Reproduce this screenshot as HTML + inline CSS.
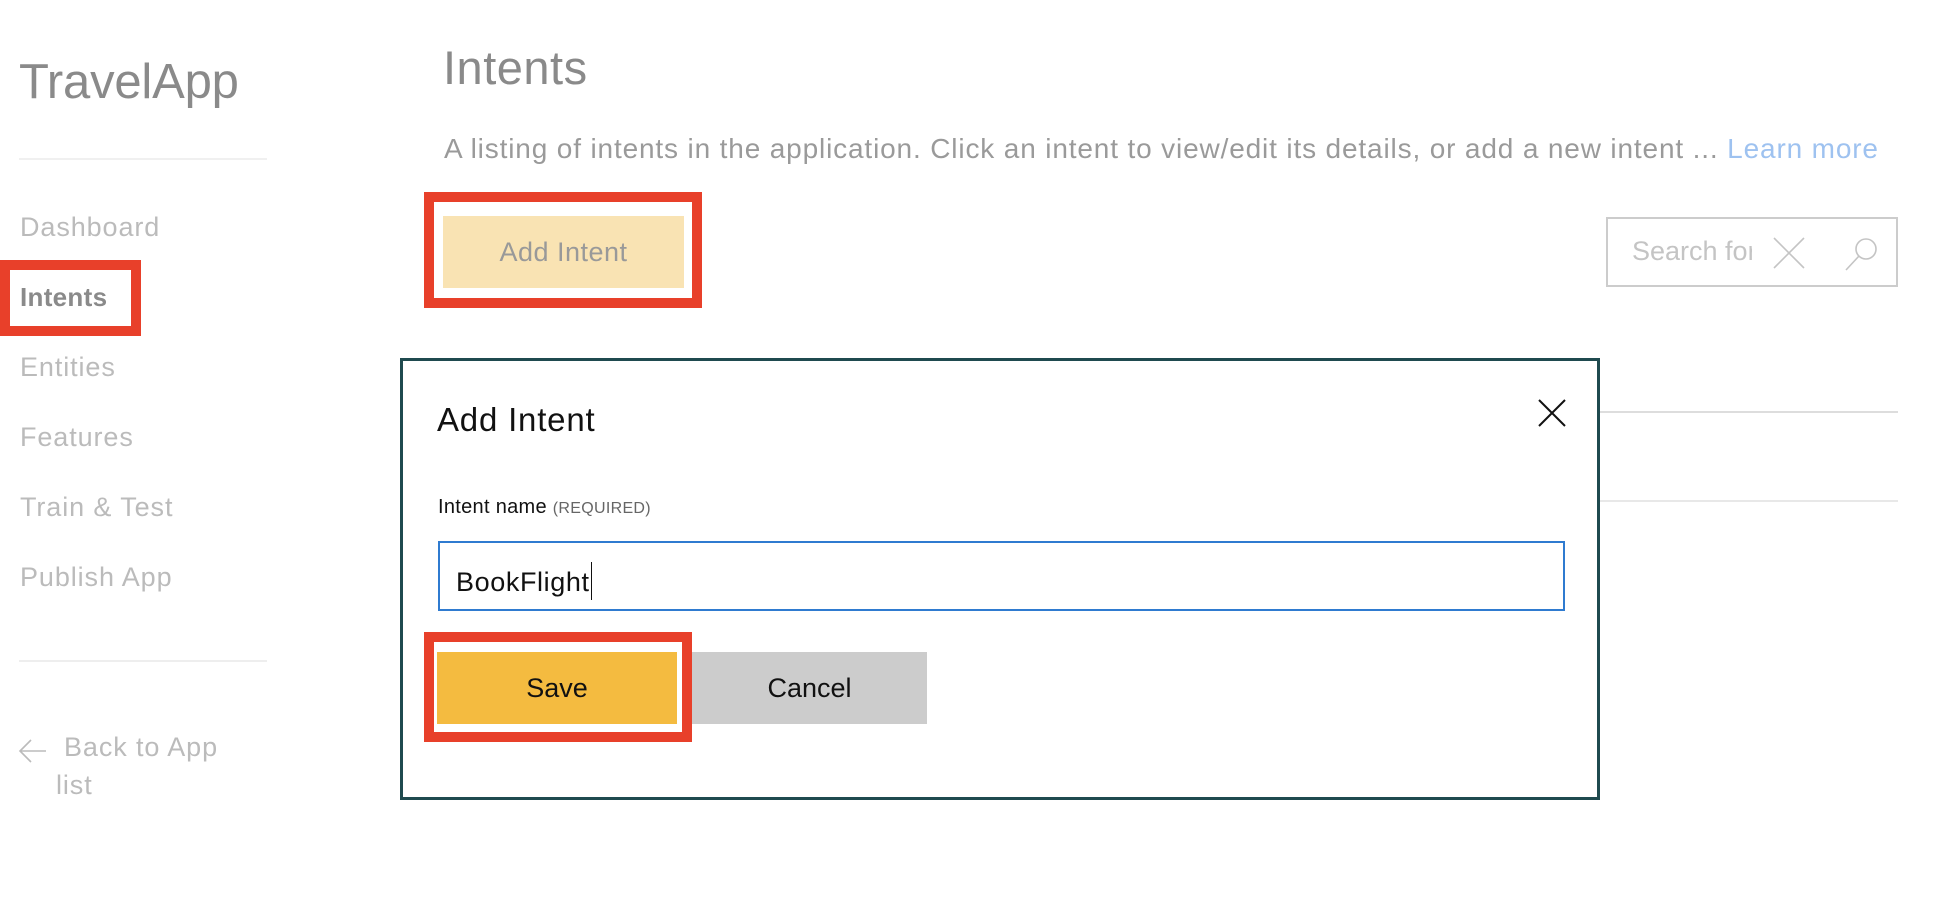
<!DOCTYPE html>
<html><head><meta charset="utf-8"><style>
*{margin:0;padding:0;box-sizing:border-box}
body{width:1940px;height:912px;background:#fff;font-family:"Liberation Sans",sans-serif;position:relative;overflow:hidden}
.a{position:absolute;white-space:nowrap}
.nav{position:absolute;left:20px;font-size:27px;color:#bbb;letter-spacing:0.9px}
</style></head><body>
<div class="a" style="left:19px;top:54px;font-size:49px;color:#8a8a8a;letter-spacing:-0.2px">TravelApp</div>
<div class="a" style="left:19px;top:158px;width:248px;height:2px;background:#f0f0f0"></div>
<div class="nav" style="top:212px">Dashboard</div>
<div class="a" style="left:0;top:260px;width:141px;height:76px;border:10px solid #e8402a"></div>
<div class="nav" style="top:282px;color:#8a8a8a;font-weight:bold;font-size:26px;letter-spacing:0.3px">Intents</div>
<div class="nav" style="top:352px">Entities</div>
<div class="nav" style="top:422px">Features</div>
<div class="nav" style="top:492px">Train &amp; Test</div>
<div class="nav" style="top:562px">Publish App</div>
<div class="a" style="left:19px;top:660px;width:248px;height:2px;background:#eee"></div>
<svg class="a" style="left:18px;top:738px" width="30" height="26" viewBox="0 0 30 26"><path d="M28 13H3M13 2L2 13l11 11" fill="none" stroke="#bbb" stroke-width="1.6"/></svg>
<div class="nav" style="left:64px;top:732px">Back to App</div>
<div class="nav" style="left:56px;top:770px">list</div>

<div class="a" style="left:443px;top:40px;font-size:47px;color:#8a8a8a;letter-spacing:0.5px">Intents</div>
<div class="a" style="left:444px;top:133px;font-size:28px;color:#9a9a9a;letter-spacing:0.85px">A listing of intents in the application. Click an intent to view/edit its details, or add a new intent ... <span style="color:#9ec2f0">Learn more</span></div>
<div class="a" style="left:424px;top:192px;width:278px;height:116px;border:10px solid #e8402a"></div>
<div class="a" style="left:443px;top:216px;width:241px;height:72px;background:#f9e3b3;color:#999;font-size:27px;text-align:center;line-height:72px;letter-spacing:0.5px">Add Intent</div>
<div class="a" style="left:1606px;top:217px;width:292px;height:70px;border:2px solid #ccc"></div>
<div class="a" style="left:1632px;top:236px;font-size:27px;color:#c4c4c4;width:120px;overflow:hidden">Search for</div>
<svg class="a" style="left:1772px;top:236px" width="34" height="34" viewBox="0 0 34 34"><path d="M2 2L32 32M32 2L2 32" stroke="#c4c4c4" stroke-width="1.6"/></svg>
<svg class="a" style="left:1844px;top:236px" width="36" height="36" viewBox="0 0 36 36"><circle cx="22" cy="13" r="10" fill="none" stroke="#c4c4c4" stroke-width="1.6"/><path d="M15 20L2 34" stroke="#c4c4c4" stroke-width="1.6"/></svg>
<div class="a" style="left:1598px;top:411px;width:300px;height:2px;background:#ddd"></div>
<div class="a" style="left:1598px;top:500px;width:300px;height:2px;background:#e8e8e8"></div>

<div class="a" style="left:400px;top:358px;width:1200px;height:442px;border:3px solid #1f4a4f;background:#fff"></div>
<div class="a" style="left:437px;top:401px;font-size:33px;color:#111;letter-spacing:0.8px">Add Intent</div>
<svg class="a" style="left:1537px;top:398px" width="30" height="30" viewBox="0 0 30 30"><path d="M2 2L28 28M28 2L2 28" stroke="#111" stroke-width="2"/></svg>
<div class="a" style="left:438px;top:496px;font-size:20px;color:#111;letter-spacing:0.3px">Intent name <span style="font-size:16px;color:#666">(REQUIRED)</span></div>
<div class="a" style="left:438px;top:541px;width:1127px;height:70px;border:2px solid #2f7bd0"></div>
<div class="a" style="left:456px;top:562px;font-size:27px;color:#111;letter-spacing:0.6px">BookFlight<span style="display:inline-block;width:1px;height:38px;background:#111;vertical-align:-9px;margin-left:1px"></span></div>
<div class="a" style="left:424px;top:632px;width:268px;height:110px;border:10px solid #e8402a"></div>
<div class="a" style="left:437px;top:652px;width:240px;height:72px;background:#f4bb40;color:#111;font-size:27px;text-align:center;line-height:72px">Save</div>
<div class="a" style="left:692px;top:652px;width:235px;height:72px;background:#cccccc;color:#111;font-size:27px;text-align:center;line-height:72px">Cancel</div>
</body></html>
